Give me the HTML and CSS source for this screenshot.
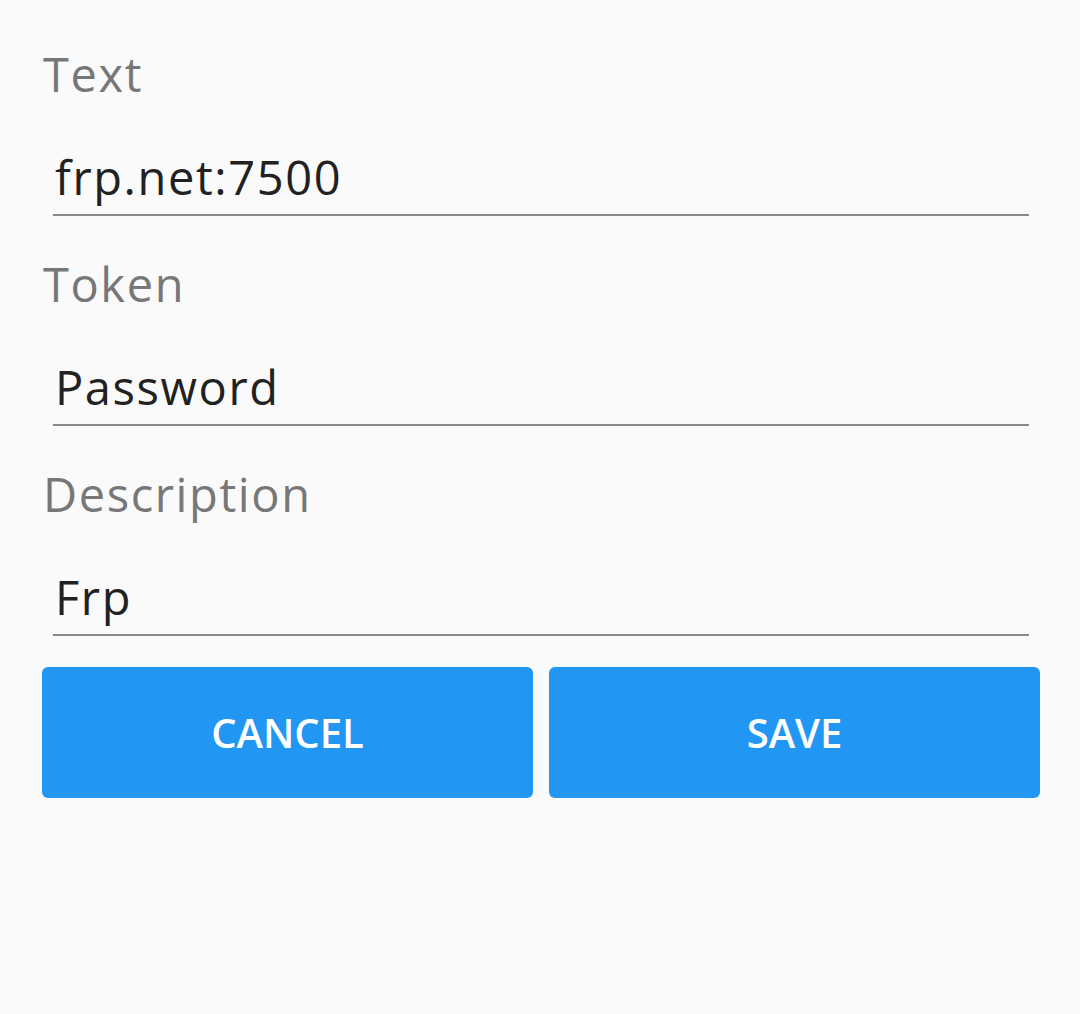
FILE: index.html
```html
<!DOCTYPE html>
<html>
<head>
<meta charset="utf-8">
<link rel="stylesheet" href="styles.css">
</head>
<body>
<div class="form">
  <div class="fields">
    <div class="field">
      <div class="label">Text</div>
      <div class="input">frp.net:7500</div>
    </div>
    <div class="field">
      <div class="label">Token</div>
      <div class="input">Password</div>
    </div>
    <div class="field">
      <div class="label">Description</div>
      <div class="input">Frp</div>
    </div>
  </div>
  <div class="buttons">
    <div class="btn">CANCEL</div>
    <div class="btn">SAVE</div>
  </div>
</div>
</body>
</html>
```
FILE: styles.css
```css
html, body {
  margin: 0;
  padding: 0;
  background: #fafafa;
}
body {
  width: 1080px;
  height: 1014px;
  font-family: "Open Sans", Lato, sans-serif;
}
.form {
  padding: 46px 40px 0 42px;
  display: flex;
  flex-direction: column;
}
.fields {
  display: flex;
  flex-direction: column;
  gap: 40px;
}
.field {
  display: flex;
  flex-direction: column;
}
.label {
  height: 56px;
  line-height: 56px;
  font-size: 47px;
  letter-spacing: 1.6px;
  color: #777777;
  padding-left: 1px;
}
.input {
  margin: 47px 11px 0 11px;
  height: 56px;
  line-height: 56px;
  font-size: 47px;
  letter-spacing: 1.6px;
  color: #212121;
  padding: 0 2px 9px 2px;
  border-bottom: 2px solid #8a8a8a;
}
.buttons {
  margin-top: 31px;
  display: flex;
  gap: 16px;
}
.btn {
  flex: 1;
  height: 131px;
  background: #2196f3;
  border-radius: 6px;
  color: #ffffff;
  font-size: 40px;
  font-weight: 600;
  display: flex;
  align-items: center;
  justify-content: center;
}
```
